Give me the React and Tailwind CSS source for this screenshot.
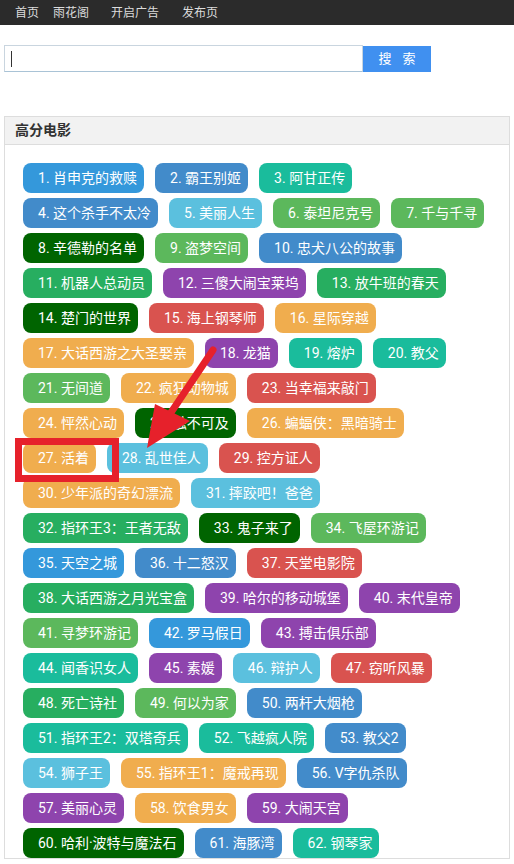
import React from "react";

const C = {
  sky: "bg-[#3498db]",
  blue: "bg-[#428bca]",
  info: "bg-[#5bc0de]",
  teal: "bg-[#1abc9c]",
  green: "bg-[#5cb85c]",
  dark: "bg-[#006400]",
  emerald: "bg-[#27ae60]",
  purple: "bg-[#8e44ad]",
  red: "bg-[#d9534f]",
  orange: "bg-[#f0ad4e]",
};

// rows as laid out on the page
const rows = [
  [["肖申克的救赎", "sky"], ["霸王别姬", "blue"], ["阿甘正传", "teal"]],
  [["这个杀手不太冷", "blue"], ["美丽人生", "info"], ["泰坦尼克号", "green"], ["千与千寻", "green"]],
  [["辛德勒的名单", "dark"], ["盗梦空间", "green"], ["忠犬八公的故事", "blue"]],
  [["机器人总动员", "emerald"], ["三傻大闹宝莱坞", "purple"], ["放牛班的春天", "emerald"]],
  [["楚门的世界", "dark"], ["海上钢琴师", "red"], ["星际穿越", "orange"]],
  [["大话西游之大圣娶亲", "orange"], ["龙猫", "purple"], ["熔炉", "teal"], ["教父", "teal"]],
  [["无间道", "green"], ["疯狂动物城", "orange"], ["当幸福来敲门", "red"]],
  [["怦然心动", "orange"], ["触不可及", "dark"], ["蝙蝠侠：黑暗骑士", "orange"]],
  [["活着", "orange"], ["乱世佳人", "info"], ["控方证人", "red"]],
  [["少年派的奇幻漂流", "orange"], ["摔跤吧！爸爸", "info"]],
  [["指环王3：王者无敌", "emerald"], ["鬼子来了", "dark"], ["飞屋环游记", "green"]],
  [["天空之城", "sky"], ["十二怒汉", "blue"], ["天堂电影院", "red"]],
  [["大话西游之月光宝盒", "emerald"], ["哈尔的移动城堡", "purple"], ["末代皇帝", "purple"]],
  [["寻梦环游记", "green"], ["罗马假日", "sky"], ["搏击俱乐部", "purple"]],
  [["闻香识女人", "teal"], ["素媛", "purple"], ["辩护人", "info"], ["窃听风暴", "red"]],
  [["死亡诗社", "emerald"], ["何以为家", "green"], ["两杆大烟枪", "blue"]],
  [["指环王2：双塔奇兵", "teal"], ["飞越疯人院", "teal"], ["教父2", "blue"]],
  [["狮子王", "info"], ["指环王1：魔戒再现", "orange"], ["V字仇杀队", "blue"]],
  [["美丽心灵", "purple"], ["饮食男女", "orange"], ["大闹天宫", "purple"]],
  [["哈利·波特与魔法石", "dark"], ["海豚湾", "blue"], ["钢琴家", "teal"]],
];

const font = { fontFamily: '"Roboto", "Noto Sans CJK SC", sans-serif' };

const Tag = ({ n, title, color }) => (
  <a className={`h-[30px] flex items-center pl-[15px] pr-[7px] rounded-lg text-white text-[14px] whitespace-nowrap ${C[color]}`}>
    {n}. {title}
  </a>
);

export default function App() {
  let n = 0;
  return (
    <div className="relative w-[514px] h-[864px] overflow-hidden bg-white" style={font}>
      <nav className="h-[25px] bg-[#2b2b2b] flex items-center text-[12px] text-[#dcdcdc]">
        <span className="ml-[15px]">首页</span>
        <span className="ml-[14px]">雨花阁</span>
        <span className="ml-[22px]">开启广告</span>
        <span className="ml-[23px]">发布页</span>
      </nav>

      <div className="mt-[20px] ml-[4px] flex h-[27px]">
        <div className="relative w-[359px]">
          <input className="w-full h-full border border-[#c9d5df] border-b-[#a9c3d6] outline-none px-2 text-[14px]" />
          <span className="absolute left-[7px] top-[6px] w-px h-[16px] bg-[#333]" />
        </div>
        <button className="w-[68px] h-[26px] mt-px bg-[#4090f0] text-white text-[13px] tracking-[4px] pl-[4px]">搜 索</button>
      </div>

      <section className="mt-[44px] ml-[4px] w-[506px] border border-[#dddddd]">
        <h3 className="h-[28px] bg-[#f2f2f2] border-b border-[#dddddd] flex items-center pl-[10px] text-[14px] font-bold text-[#333]">
          高分电影
        </h3>
        <div className="pl-[18px] pt-[18px] flex flex-col gap-[5px]">
          {rows.map((row, i) => (
            <div key={i} className="flex gap-[11px]">
              {row.map(([title, color]) => {
                n += 1;
                return <Tag key={n} n={n} title={title} color={color} />;
              })}
            </div>
          ))}
        </div>
      </section>

      {/* red annotation */}
      <div className="absolute left-[15px] top-[438px] w-[104px] h-[44px] border-[7px] border-[#e6212b] pointer-events-none" />
      <svg className="absolute inset-0 pointer-events-none" width="514" height="864">
        <line x1="213" y1="350" x2="170" y2="414" stroke="#e6212b" strokeWidth="7" strokeLinecap="round" />
        <polygon points="147,448 155,404 190,421" fill="#e6212b" />
      </svg>
    </div>
  );
}
